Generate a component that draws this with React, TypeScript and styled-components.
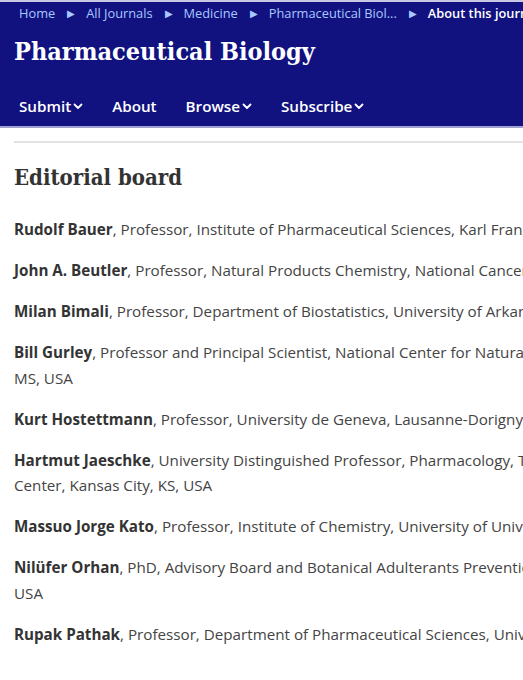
import React from "react";
import styled, { createGlobalStyle } from "styled-components";

interface IMember {
  name: string;
  details: string;
}

const crumbs = ["Home", "All Journals", "Medicine", "Pharmaceutical Biol..."];

const navItems = [
  { label: "Submit", hasMenu: true },
  { label: "About", hasMenu: false },
  { label: "Browse", hasMenu: true },
  { label: "Subscribe", hasMenu: true },
];

const members: IMember[] = [
  {
    name: "Rudolf Bauer",
    details:
      "Professor, Institute of Pharmaceutical Sciences, Karl Franzens University Graz, Graz, Austria",
  },
  {
    name: "John A. Beutler",
    details:
      "Professor, Natural Products Chemistry, National Cancer Institute, Frederick, MD, USA",
  },
  {
    name: "Milan Bimali",
    details:
      "Professor, Department of Biostatistics, University of Arkansas for Medical Sciences, Little Rock, AR, USA",
  },
  {
    name: "Bill Gurley",
    details:
      "Professor and Principal Scientist, National Center for Natural Products Research, University of Mississippi, University, MS, USA",
  },
  {
    name: "Kurt Hostettmann",
    details: "Professor, University de Geneva, Lausanne-Dorigny, Switzerland",
  },
  {
    name: "Hartmut Jaeschke",
    details:
      "University Distinguished Professor, Pharmacology, Toxicology and Therapeutics, University of Kansas Medical Center, Kansas City, KS, USA",
  },
  {
    name: "Massuo Jorge Kato",
    details:
      "Professor, Institute of Chemistry, University of University of São Paulo, São Paulo, Brazil",
  },
  {
    name: "Nilüfer Orhan",
    details:
      "PhD, Advisory Board and Botanical Adulterants Prevention Program, American Botanical Council, Austin, Texas, USA",
  },
  {
    name: "Rupak Pathak",
    details:
      "Professor, Department of Pharmaceutical Sciences, University of Arkansas for Medical Sciences, Little Rock, USA",
  },
];

const GlobalStyle = createGlobalStyle`
  body {
    margin: 0;
    overflow: hidden;
    background: #ffffff;
    font-family: "Open Sans", sans-serif;
  }
`;

const Chevron = () => (
  <svg width="10" height="7" viewBox="0 0 10 7" aria-hidden="true">
    <path
      d="M1.5 1.5 L5 5 L8.5 1.5"
      fill="none"
      stroke="currentColor"
      strokeWidth="1.8"
      strokeLinecap="round"
      strokeLinejoin="round"
    />
  </svg>
);

const App: React.FC = () => (
  <Page>
    <GlobalStyle />
    <Header>
      <Breadcrumbs>
        {crumbs.map((c) => (
          <React.Fragment key={c}>
            <Crumb>{c}</Crumb>
            <Separator>&#9654;</Separator>
          </React.Fragment>
        ))}
        <Crumb $current>About this journal</Crumb>
      </Breadcrumbs>
      <JournalTitle>Pharmaceutical Biology</JournalTitle>
      <Nav>
        {navItems.map((item) => (
          <NavItem key={item.label}>
            {item.label}
            {item.hasMenu && <Chevron />}
          </NavItem>
        ))}
      </Nav>
    </Header>
    <Main>
      <Divider />
      <Heading>Editorial board</Heading>
      {members.map((m) => (
        <Member key={m.name}>
          <strong>{m.name}</strong>, {m.details}
        </Member>
      ))}
    </Main>
  </Page>
);

export default App;

const Page = styled.div`
  width: 950px;
`;

const Header = styled.header`
  background: #11127f;
  border-top: 2px solid #c9c9e6;
  border-bottom: 2px solid #9fa1d2;
  padding: 0 14px;
`;

const Breadcrumbs = styled.div`
  display: flex;
  align-items: center;
  height: 22px;
  padding-left: 5px;
  font-size: 12.8px;
  white-space: nowrap;
`;

const Crumb = styled.span<{ $current?: boolean }>`
  color: ${(p) => (p.$current ? "#ffffff" : "#a9c8ff")};
  font-weight: ${(p) => (p.$current ? 600 : 500)};
`;

const Separator = styled.span`
  color: #a9c8ff;
  font-size: 10px;
  margin: 0 11px 0 12px;
`;

const JournalTitle = styled.h1`
  margin: 0;
  height: 55px;
  display: flex;
  align-items: center;
  font-family: "DejaVu Serif Condensed", "DejaVu Serif", serif;
  font-stretch: condensed;
  font-weight: bold;
  font-size: 25px;
  color: #ffffff;
`;

const Nav = styled.nav`
  display: flex;
  align-items: center;
  gap: 29px;
  height: 40px;
  padding: 7px 0 0 5px;
`;

const NavItem = styled.span`
  display: flex;
  align-items: center;
  gap: 2px;
  color: #ffffff;
  font-size: 15.2px;
  font-weight: 600;
`;

const Main = styled.main`
  padding: 13px 14px 0;
`;

const Divider = styled.hr`
  margin: 0;
  border: none;
  border-top: 2px solid #e3e3e3;
`;

const Heading = styled.h2`
  margin: 21px 0 27px;
  font-family: "DejaVu Serif Condensed", "DejaVu Serif", serif;
  font-stretch: condensed;
  font-weight: bold;
  font-size: 22px;
  color: #333333;
`;

const Member = styled.p`
  margin: 0 0 15.5px;
  font-size: 15.2px;
  line-height: 25.5px;
  color: #444444;

  strong {
    font-weight: 700;
    color: #333333;
  }
`;
